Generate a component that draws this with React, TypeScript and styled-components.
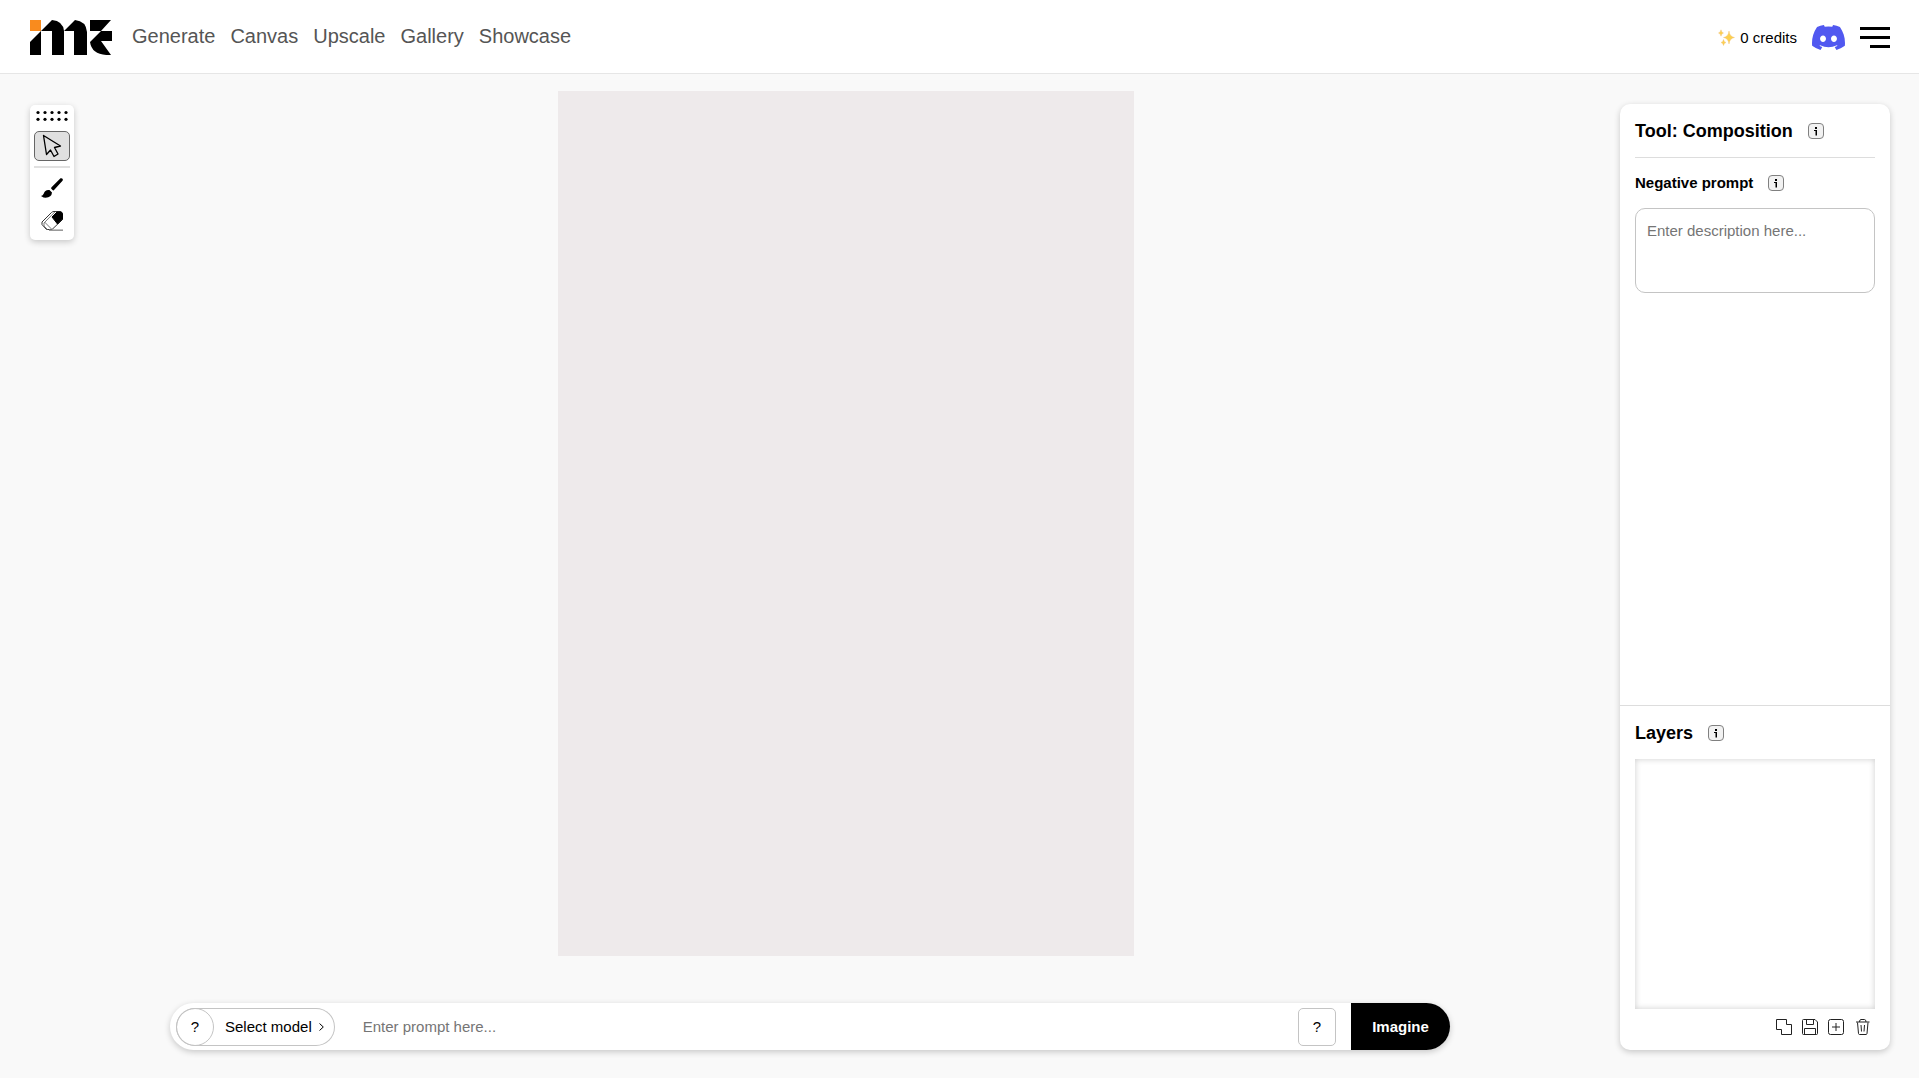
import React from "react";
import styled, { createGlobalStyle } from "styled-components";

const Global = createGlobalStyle`
  *, *::before, *::after { box-sizing: border-box; }
  body {
    margin: 0;
    background: #f9f9f9;
    color: #000;
    font: 15px/20px "Liberation Sans", Arial, sans-serif;
  }
  button, input, textarea { font: inherit; color: inherit; }
  button { padding: 0; border: 0; background: none; cursor: pointer; }
  svg { display: block; }
`;

const Page = styled.div`
  display: flex;
  flex-direction: column;
  height: 100vh;
  min-height: 600px;
`;

const Header = styled.header`
  display: flex;
  align-items: center;
  justify-content: space-between;
  height: 74px;
  flex: none;
  padding: 2px 29px 0 30px;
  background: #fff;
  border-bottom: 1px solid #e6e6e6;
`;

const Group = styled.div<{ $gap: number }>`
  display: flex;
  align-items: center;
  gap: ${(p) => p.$gap}px;
`;

const Nav = styled.nav`
  display: flex;
  gap: 15px;
  padding-bottom: 3px;
`;

const NavLink = styled.a`
  color: #555;
  font-size: 20px;
  line-height: 24px;
  text-decoration: none;
`;

const Credits = styled.span`
  display: flex;
  align-items: center;
  gap: 5px;
`;

const MenuButton = styled.button`
  display: flex;
  flex-direction: column;
  align-items: flex-end;
  gap: 6px;
`;

const MenuLine = styled.span<{ $short?: boolean }>`
  width: ${(p) => (p.$short ? 20 : 30)}px;
  height: 3px;
  background: #000;
`;

const Workspace = styled.main`
  display: grid;
  grid-template-columns: 44px minmax(0, 1fr) 270px;
  grid-template-rows: minmax(0, 1fr) 47px;
  row-gap: 47px;
  flex: 1;
  min-height: 0;
  padding: 17px 29px 28px 30px;
`;

const Toolbar = styled.div`
  grid-area: 1 / 1;
  align-self: start;
  display: flex;
  flex-direction: column;
  align-items: center;
  margin-top: 14px;
  padding: 4px 4px 3px;
  border-radius: 5px;
  background: #fff;
  box-shadow: 0 2px 6px rgba(0, 0, 0, 0.2);
`;

const Grip = styled.svg`
  margin-bottom: 10px;
`;

const ToolButton = styled.button<{ $active?: boolean }>`
  display: grid;
  place-items: center;
  width: 36px;
  height: ${(p) => (p.$active ? 30 : 33)}px;
  border: ${(p) => (p.$active ? "1px solid #666" : "0")};
  border-radius: 5px;
  background: ${(p) => (p.$active ? "#e0e0e0" : "transparent")};
`;

const ToolDivider = styled.hr`
  width: 100%;
  height: 2px;
  margin: 5px 0 3px;
  border: 0;
  background: #e0e0e0;
`;

const Stage = styled.div`
  grid-area: 1 / 2;
  display: flex;
  justify-content: center;
  min-height: 0;
  padding-right: 2px;
`;

const Artboard = styled.div`
  height: 100%;
  aspect-ratio: 2 / 3;
  background: #eeeaeb;
`;

const Panel = styled.aside`
  grid-area: 1 / 3 / 3 / 4;
  display: flex;
  flex-direction: column;
  margin-top: 13px;
  border-radius: 10px;
  background: #fff;
  box-shadow: 0 2px 6px rgba(0, 0, 0, 0.2);
`;

const Options = styled.section`
  flex: 1;
  padding: 0 15px;
`;

const LayerSection = styled.section`
  padding: 0 15px 15px;
  border-top: 1px solid #ddd;
`;

const TitleRow = styled.div<{ $ruled?: boolean }>`
  display: flex;
  align-items: center;
  gap: 15px;
  height: ${(p) => (p.$ruled ? 54 : 53)}px;
  border-bottom: ${(p) => (p.$ruled ? "1px solid #ddd" : "0")};
`;

const Title = styled.h2`
  margin: 0;
  font-size: 18px;
  line-height: 20px;
`;

const FieldRow = styled.div`
  display: flex;
  align-items: center;
  gap: 15px;
  height: 50px;
`;

const FieldLabel = styled.label`
  font-weight: bold;
`;

const Description = styled.textarea`
  display: block;
  width: 100%;
  height: 85px;
  padding: 12px 11px;
  border: 1px solid #c4c4c4;
  border-radius: 10px;
  background: #fff;
  resize: none;
  &::placeholder { color: #757575; }
`;

const LayerList = styled.div`
  height: 250px;
  box-shadow: inset 0 0 6px rgba(0, 0, 0, 0.2);
`;

const LayerActions = styled.div`
  display: flex;
  justify-content: flex-end;
  gap: 10px;
  padding: 10px 5px 0 0;
`;

const PromptBar = styled.form`
  grid-area: 2 / 1 / 3 / 3;
  justify-self: center;
  display: flex;
  align-items: center;
  width: calc(100% - 30px);
  max-width: 1280px;
  margin-right: 30px;
  padding-left: 6px;
  border-radius: 24px;
  background: #fff;
  box-shadow: 0 2px 6px rgba(0, 0, 0, 0.2);
`;

const ModelPicker = styled.div`
  display: flex;
  align-items: center;
  height: 38px;
  border-radius: 19px;
  box-shadow: inset 0 0 0 1px #c4c4c4;
`;

const HelpButton = styled.button<{ $round?: boolean }>`
  flex: none;
  width: 38px;
  height: 38px;
  border: 1px solid #c4c4c4;
  border-radius: ${(p) => (p.$round ? 19 : 5)}px;
`;

const ModelButton = styled.button`
  display: flex;
  align-items: center;
  gap: 7px;
  height: 38px;
  padding: 0 11px;
`;

const PromptInput = styled.input`
  flex: 1;
  min-width: 0;
  height: 38px;
  margin: 0 15px 0 28px;
  padding: 0;
  border: 0;
  outline: 0;
  background: none;
  &::placeholder { color: #757575; }
`;

const Submit = styled.button`
  width: 99px;
  height: 47px;
  margin-left: 15px;
  border-radius: 0 24px 24px 0;
  background: #000;
  color: #fff;
  font-weight: bold;
`;

const Logo = () => (
  <svg width="82" height="35" viewBox="0 0 82 35" role="img" aria-label="Home">
    <path d="M0 0H11V11H0Z" fill="#f98b1e" />
    <path d="M11 11V35H0V22Z" />
    <path d="M11 11L22 0Q33 1 34 11V35H22V11Z" />
    <path d="M34 11L45 0Q56 1 57 12V35H44V11Z" />
    <path d="M60 0H81L71 11H82V21H71L81 35Q62 36 60 22L71 11H60Z" />
  </svg>
);

const Sparkles = () => (
  <svg width="17" height="17" viewBox="0 0 17 17" fill="#fcd04f" stroke="#efbd72" strokeWidth=".4" aria-hidden="true">
    <path d="M11 2Q11.7 7.800 16.500 8.500Q11.700 9.200 11 15Q10.300 9.200 5.500 8.500Q10.300 7.800 11 2Z" />
    <path d="M3 .8Q3.400 3.600 5.500 4Q3.400 4.400 3 7.200Q2.600 4.400 .5 4Q2.600 3.600 3 .8Z" />
    <path d="M5.500 10.500Q5.900 13 8 13.500Q5.900 14 5.500 16.500Q5.100 14 3 13.500Q5.100 13 5.500 10.500Z" />
  </svg>
);

const Discord = () => (
  <svg width="33" height="25" viewBox="0 0 127.140 96.360" fill="#5158f0" aria-hidden="true">
    <path d="M107.700 8.070A105.150 105.150 0 0 0 81.470 0a72.060 72.060 0 0 0-3.360 6.830 97.680 97.680 0 0 0-29.110 0A72.370 72.370 0 0 0 45.640 0a105.890 105.890 0 0 0-26.250 8.090C2.790 32.650-1.710 56.600.54 80.210a105.730 105.730 0 0 0 32.170 16.150 77.700 77.700 0 0 0 6.890-11.110 68.420 68.420 0 0 1-10.850-5.180c.91-.66 1.800-1.340 2.660-2a75.570 75.570 0 0 0 64.320 0c.87.710 1.760 1.390 2.660 2a68.680 68.680 0 0 1-10.870 5.190 77 77 0 0 0 6.890 11.100 105.250 105.250 0 0 0 32.190-16.140c2.640-27.380-4.510-51.110-18.900-72.150ZM42.450 65.690C36.180 65.690 31 60 31 53s5-12.740 11.430-12.740S54 46 53.890 53s-5.050 12.690-11.440 12.690Zm42.240 0C78.410 65.690 73.250 60 73.250 53s5-12.740 11.440-12.740S96.230 46 96.120 53s-5.040 12.690-11.430 12.690Z" />
  </svg>
);

const InfoButton = ({ label }: { label: string }) => (
  <button type="button" aria-label={label}>
    <svg width="16" height="16" viewBox="0 0 16 16">
      <rect x=".5" y=".5" width="15" height="15" rx="3.500" fill="#f2f2f2" stroke="#808080" />
      <path d="M7 4h2v2H7ZM6 7h3v5.500H7.500V8H6Z" />
    </svg>
  </button>
);

const layerIcons: { label: string; art: React.ReactNode }[] = [
  { label: "Merge layers", art: <path d="M.5 .5H10.500V5.500H15.500V15.500H5.500V10.500H.5Z" /> },
  {
    label: "Save layer",
    art: <path d="M.5 1.500Q.5 .5 1.500 .5H13L15.500 3V14.500Q15.500 15.500 14.500 15.500H1.500Q.5 15.500 .5 14.500ZM4.500 .5V5.500H11.500V.5M2.500 15.500V9.500H13.500V15.500" />,
  },
  {
    label: "Add layer",
    art: <><rect x=".5" y=".5" width="15" height="15" rx="2" /><path d="M8 4V12M4 8H12" /></>,
  },
  {
    label: "Delete layer",
    art: <path d="M2 3H15.500M3.500 3.500L4.500 14.500Q4.700 15.500 5.500 15.500H12Q12.800 15.500 13 14.500L14 3.500M5.500 3Q5.500 .5 7 .5H10.500Q12 .5 12 3M7 6L7.500 12.500M10.500 6L10 12.500" />,
  },
];

export default function App() {
  return (
    <>
      <Global />
      <Page>
        <Header>
          <Group $gap={20}>
            <Logo />
            <Nav>
              {["Generate", "Canvas", "Upscale", "Gallery", "Showcase"].map((name) => (
                <NavLink key={name} href={`#${name.toLowerCase()}`}>{name}</NavLink>
              ))}
            </Nav>
          </Group>
          <Group $gap={15}>
            <Credits><Sparkles />0 credits</Credits>
            <a href="#discord" aria-label="Discord"><Discord /></a>
            <MenuButton type="button" aria-label="Menu">
              <MenuLine /><MenuLine /><MenuLine $short />
            </MenuButton>
          </Group>
        </Header>
        <Workspace>
          <Toolbar>
            <Grip width="32" height="12" viewBox="0 0 32 12" aria-hidden="true">
              {[2, 9, 16, 23, 30].map((x) => (
                <g key={x}><circle cx={x} cy="3.500" r="1.600" /><circle cx={x} cy="10.300" r="1.600" /></g>
              ))}
            </Grip>
            <ToolButton type="button" $active aria-label="Select">
              <svg width="20" height="24" viewBox="0 0 20 24" fill="none" stroke="#000" strokeWidth="1.300" strokeLinejoin="round">
                <path d="M1.500 1.500L18.500 12L12.500 13.500L16 20L12 22.500L8.500 16L4.500 20.500Z" />
              </svg>
            </ToolButton>
            <ToolDivider />
            <ToolButton type="button" aria-label="Brush">
              <svg width="22" height="20" viewBox="0 0 22 20">
                <path d="M19.500 .3Q21 -.2 21.700 1Q22.100 2 21.300 3L13.500 11.500Q12.500 13 11.500 12L10.300 10.700Q9.700 10 11 8.800Z" />
                <path d="M8.500 12L11 14.500Q10.500 20.500 2.500 19.500L0 18Q2 17.800 2.800 15.500Q4 11.300 8.500 12Z" />
              </svg>
            </ToolButton>
            <ToolButton type="button" aria-label="Eraser">
              <svg width="22" height="20" viewBox="0 0 22 20" fill="none" stroke="#333" strokeLinejoin="round">
                <path d="M1 11L10.500 1.500Q11.500 .5 13 .5H19Q21.500 .7 21.500 3V8.500L11 18.500H5.500L1 13.500Z" fill="#fff" />
                <path d="M11 6L16 1H20L21.500 3V8L16.500 13Z" fill="#000" stroke="#000" />
                <path d="M14 .8L3 12V15L6.500 18.500M3.500 11L10.500 18" stroke="#777" />
                <path d="M8 19.200H22" stroke="#999" strokeWidth="1.600" />
              </svg>
            </ToolButton>
          </Toolbar>
          <Stage><Artboard /></Stage>
          <Panel>
            <Options>
              <TitleRow $ruled>
                <Title>Tool: Composition</Title>
                <InfoButton label="About the composition tool" />
              </TitleRow>
              <FieldRow>
                <FieldLabel htmlFor="negative">Negative prompt</FieldLabel>
                <InfoButton label="About the negative prompt" />
              </FieldRow>
              <Description id="negative" placeholder="Enter description here..." />
            </Options>
            <LayerSection>
              <TitleRow>
                <Title>Layers</Title>
                <InfoButton label="About layers" />
              </TitleRow>
              <LayerList />
              <LayerActions>
                {layerIcons.map(({ label, art }) => (
                  <button key={label} type="button" aria-label={label}>
                    <svg width="16" height="16" viewBox="0 0 16 16" fill="none" stroke="#222">{art}</svg>
                  </button>
                ))}
              </LayerActions>
            </LayerSection>
          </Panel>
          <PromptBar onSubmit={(e) => e.preventDefault()}>
            <ModelPicker>
              <HelpButton type="button" $round aria-label="About models">?</HelpButton>
              <ModelButton type="button">
                Select model
                <svg width="5" height="8" viewBox="0 0 5 8" fill="none" stroke="#000"><path d="M.5 .5L4.300 4L.5 7.500" /></svg>
              </ModelButton>
            </ModelPicker>
            <PromptInput aria-label="Prompt" placeholder="Enter prompt here..." />
            <HelpButton type="button" aria-label="About prompts">?</HelpButton>
            <Submit type="submit">Imagine</Submit>
          </PromptBar>
        </Workspace>
      </Page>
    </>
  );
}
